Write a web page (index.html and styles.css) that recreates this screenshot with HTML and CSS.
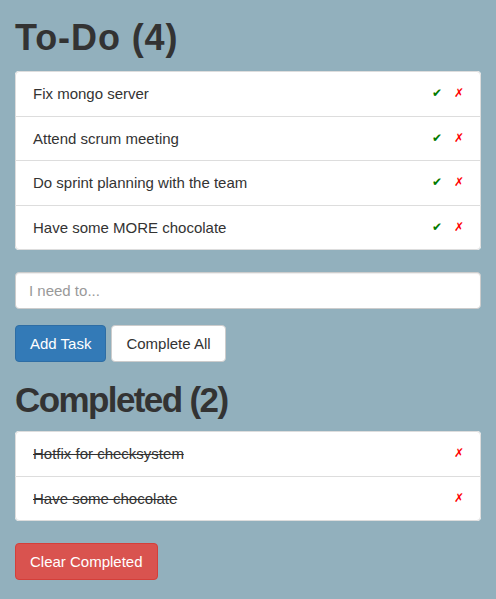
FILE: index.html
```html
<!DOCTYPE html>
<html>
<head>
<meta charset="utf-8">
<link rel="stylesheet" href="styles.css">
</head>
<body>
<div class="app">
  <h1 class="title title-todo">To-Do (4)</h1>
  <ul class="list">
    <li class="item"><span class="label">Fix mongo server</span><span class="actions"><span class="done">✔</span><span class="del">✗</span></span></li>
    <li class="item"><span class="label">Attend scrum meeting</span><span class="actions"><span class="done">✔</span><span class="del">✗</span></span></li>
    <li class="item"><span class="label">Do sprint planning with the team</span><span class="actions"><span class="done">✔</span><span class="del">✗</span></span></li>
    <li class="item"><span class="label">Have some MORE chocolate</span><span class="actions"><span class="done">✔</span><span class="del">✗</span></span></li>
  </ul>
  <input class="field" type="text" placeholder="I need to...">
  <div class="btns">
    <button class="btn btn-primary">Add Task</button>
    <button class="btn btn-default">Complete All</button>
  </div>
  <h1 class="title title-done">Completed (2)</h1>
  <ul class="list">
    <li class="item"><span class="label struck">Hotfix for checksystem</span><span class="actions"><span class="del">✗</span></span></li>
    <li class="item"><span class="label struck">Have some chocolate</span><span class="actions"><span class="del">✗</span></span></li>
  </ul>
  <div class="btns btns-clear">
    <button class="btn btn-danger">Clear Completed</button>
  </div>
</div>
</body>
</html>
```
FILE: styles.css
```css
* { box-sizing: border-box; }
html, body {
  margin: 0;
  padding: 0;
  background: #92b0bd;
}
body {
  font-family: "Liberation Sans", Arial, sans-serif;
  font-size: 15px;
  color: #333;
}
.app {
  padding: 0 15px;
  display: flex;
  flex-direction: column;
}
.title {
  font-size: 35px;
  line-height: 40px;
  font-weight: bold;
  color: #333;
  margin: 0;
}
.title-todo { margin: 18px 0 13px; font-size: 36px; letter-spacing: 0.9px; }
.title-done { margin: 18px 0 11px; letter-spacing: -1.6px; }
.list {
  list-style: none;
  margin: 0;
  padding: 0;
  background: #fff;
  border-radius: 4px;
}
.item {
  display: flex;
  align-items: center;
  justify-content: space-between;
  padding: 11px 16px 11px 17px;
  line-height: 21.5px;
  border: 1px solid #ddd;
  margin-bottom: -1px;
  background: #fff;
}
.item:first-child { border-radius: 4px 4px 0 0; }
.item:last-child { border-radius: 0 0 4px 4px; margin-bottom: 0; }
.struck { text-decoration: line-through; }
.actions {
  display: flex;
  gap: 12px;
  font-size: 12px;
}
.done { color: #007a00; }
.del { color: #ff0000; }
.field {
  margin-top: 22px;
  height: 37px;
  width: 100%;
  padding: 6px 13px;
  font-family: inherit;
  font-size: 15px;
  color: #555;
  background: #fff;
  border: 1px solid #ccc;
  border-radius: 4px;
  box-shadow: inset 0 1px 1px rgba(0,0,0,.075);
}
.field::placeholder { color: #999; }
.btns {
  display: flex;
  gap: 5px;
  margin-top: 16px;
}
.btns-clear { margin-top: 22px; }
.btn {
  height: 37px;
  padding: 0 14px;
  font-family: inherit;
  font-size: 15px;
  border: 1px solid transparent;
  border-radius: 4px;
  line-height: 35px;
}
.btn-primary { background: #337ab7; border-color: #2e6da4; color: #fff; }
.btn-default { background: #fff; border-color: #ccc; color: #333; }
.btn-danger { background: #d9534f; border-color: #d43f3a; color: #fff; }
```
